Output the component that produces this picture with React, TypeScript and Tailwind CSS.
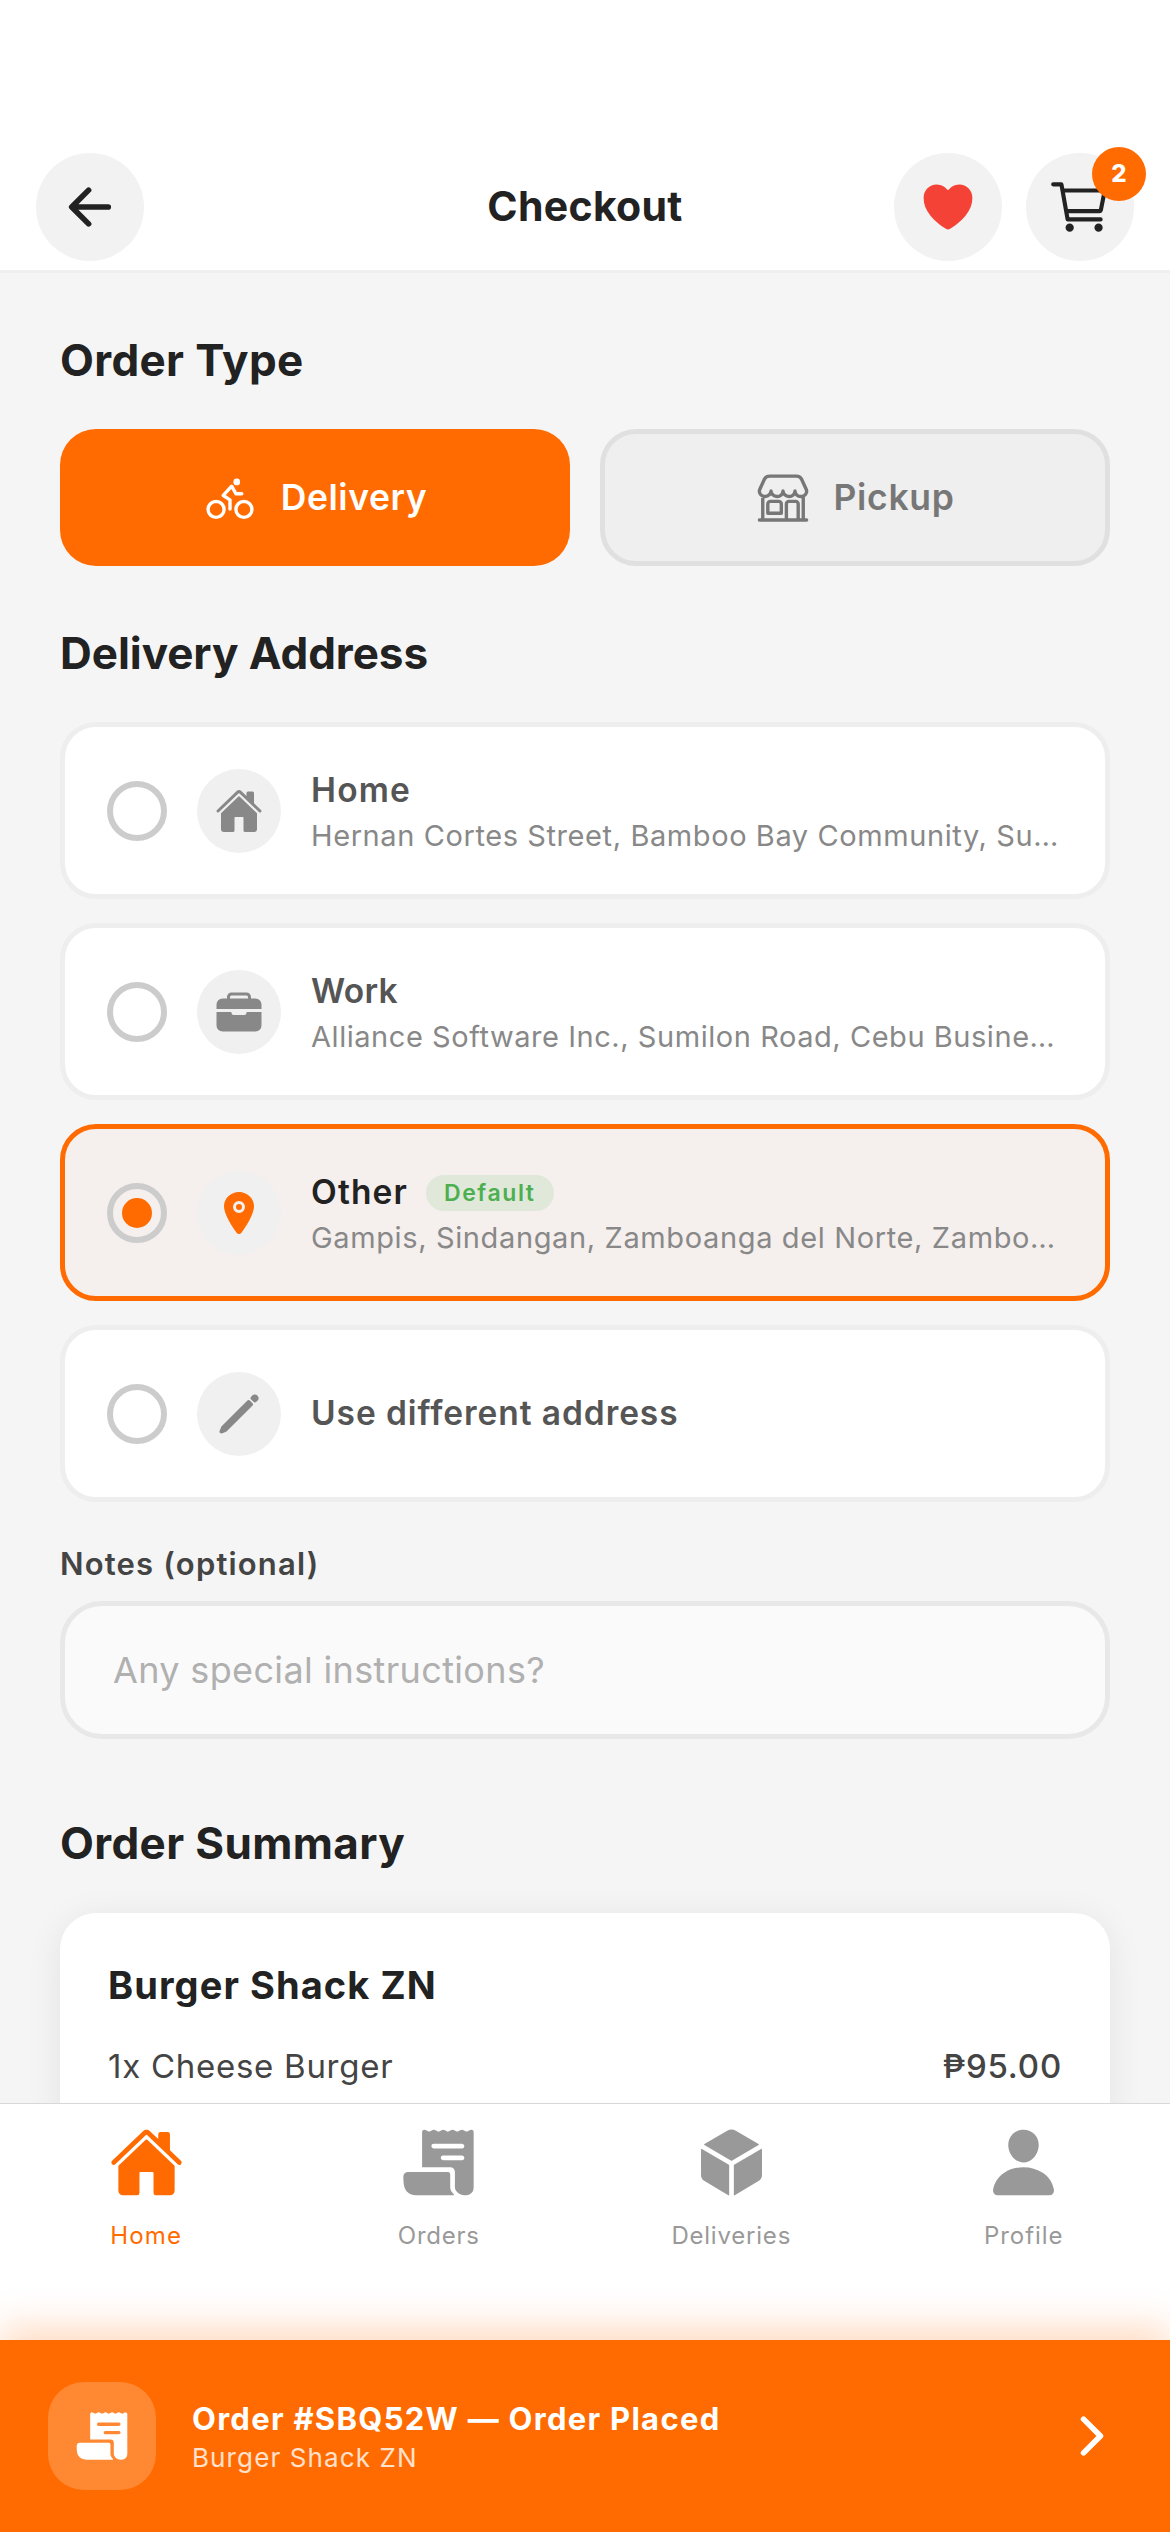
import type { ReactNode } from 'react';
import type { IconType } from 'react-icons';
import {
  IoArrowBack,
  IoBicycleOutline,
  IoBriefcase,
  IoCartOutline,
  IoChevronForward,
  IoCube,
  IoHeart,
  IoHome,
  IoLocation,
  IoPencil,
  IoPerson,
  IoReceipt,
  IoStorefrontOutline,
} from 'react-icons/io5';

type Address = {
  icon: IconType;
  title: string;
  titleTracking: string;
  detail?: string;
  detailTracking?: string;
  selected?: boolean;
};

const addresses: Address[] = [
  {
    icon: IoHome,
    title: 'Home',
    titleTracking: 'tracking-[1.15px]',
    detail: 'Hernan Cortes Street, Bamboo Bay Community, Su…',
    detailTracking: 'tracking-[0.59px]',
  },
  {
    icon: IoBriefcase,
    title: 'Work',
    titleTracking: 'tracking-[0.3px]',
    detail: 'Alliance Software Inc., Sumilon Road, Cebu Busine…',
    detailTracking: 'tracking-[0.55px]',
  },
  {
    icon: IoLocation,
    title: 'Other',
    titleTracking: 'tracking-[1.15px]',
    detail: 'Gampis, Sindangan, Zamboanga del Norte, Zambo…',
    detailTracking: 'tracking-[0.63px]',
    selected: true,
  },
  { icon: IoPencil, title: 'Use different address', titleTracking: 'tracking-[0.93px]' },
];

const tabs = [
  { icon: IoHome, label: 'Home', color: 'text-[#ff6b00]', tracking: 'tracking-[1.2px]' },
  { icon: IoReceipt, label: 'Orders', color: 'text-[#999999]', tracking: 'tracking-[0.76px]' },
  { icon: IoCube, label: 'Deliveries', color: 'text-[#999999]', tracking: 'tracking-[0.79px]' },
  { icon: IoPerson, label: 'Profile', color: 'text-[#999999]', tracking: 'tracking-[0.97px]' },
];

function RoundButton({ children }: { children: ReactNode }) {
  return (
    <button className="relative flex size-[108px] items-center justify-center rounded-full bg-[#f2f2f2] text-[#222222]">
      {children}
    </button>
  );
}

function Header() {
  return (
    <header className="grid shrink-0 grid-cols-[1fr_auto_1fr] items-center border-b-[3px] border-[#efefef] bg-white px-9 pt-[153px] pb-[9px]">
      <div>
        <RoundButton>
          <IoArrowBack className="size-[60px]" />
        </RoundButton>
      </div>
      <h1 className="pb-[3px] text-[41px] leading-[54px] font-bold tracking-[0.29px] text-[#222222]">Checkout</h1>
      <div className="flex justify-end gap-6">
        <RoundButton>
          <IoHeart className="size-[60px] text-[#f44336]" />
        </RoundButton>
        <RoundButton>
          <IoCartOutline className="size-[66px]" />
          <span className="absolute -top-1.5 -right-3 flex size-[54px] items-center justify-center rounded-full bg-[#ff6b00] text-2xl font-extrabold text-white">
            2
          </span>
        </RoundButton>
      </div>
    </header>
  );
}

function OrderType() {
  return (
    <div className="mt-[39px] grid grid-cols-2 gap-[30px]">
      <button className="flex h-[137px] items-center justify-center gap-6 rounded-[36px] bg-[#ff6b00] text-[35.5px] font-semibold tracking-[0.59px] text-white">
        <IoBicycleOutline className="size-[54px]" />
        Delivery
      </button>
      <button className="flex h-[137px] items-center justify-center gap-6 rounded-[36px] border-[5px] border-[#e0e0e0] bg-[#efefef] text-[35.5px] font-semibold tracking-[0.66px] text-[#777777]">
        <IoStorefrontOutline className="size-[54px]" />
        Pickup
      </button>
    </div>
  );
}

function AddressCard({ icon: Icon, title, titleTracking, detail, detailTracking, selected }: Address) {
  return (
    <div
      className={`flex h-[177px] items-center rounded-[36px] border-[5px] px-[42px] ${
        selected ? 'border-[#ff6b00] bg-[#f5efed]' : 'border-[#eeeeee] bg-white'
      }`}
    >
      <span className="flex size-[60px] shrink-0 items-center justify-center rounded-full border-[6px] border-[#cccccc]">
        {selected && <span className="size-[30px] rounded-full bg-[#ff6b00]" />}
      </span>
      <span
        className={`ml-[30px] flex size-[84px] shrink-0 items-center justify-center rounded-full bg-[#f0f0f0] ${
          selected ? 'text-[#ff6b00]' : 'text-[#888888]'
        }`}
      >
        <Icon className="size-12" />
      </span>
      <div className={`ml-[30px] min-w-0 ${detail ? 'pt-1' : 'pb-0.5'}`}>
        <div className="flex items-center gap-[18px]">
          <span
            className={`text-[33.5px] leading-[46px] font-semibold whitespace-nowrap ${titleTracking} ${
              selected ? 'text-[#222222]' : 'text-[#555555]'
            }`}
          >
            {title}
          </span>
          {selected && (
            <span className="mt-0.5 flex h-9 items-center rounded-full bg-[#e0e8da] pr-[18px] pl-[18px] text-[23px] leading-9 font-semibold tracking-[1.57px] text-[#4caf50]">
              Default
            </span>
          )}
        </div>
        {detail && (
          <p className={`text-[29px] leading-[46px] whitespace-nowrap text-[#888888] ${detailTracking}`}>{detail}</p>
        )}
      </div>
    </div>
  );
}

function OrderSummary() {
  return (
    <section className="mt-10 h-[600px] rounded-[36px] bg-white px-12 pt-[45px] shadow-[0_6px_36px_rgba(0,0,0,0.08)]">
      <h3 className="text-[38px] leading-[54px] font-bold tracking-[1.08px] text-[#222222]">Burger Shack ZN</h3>
      <div className="mt-[30px] flex justify-between text-[33px] leading-[48px] text-[#444444]">
        <span className="tracking-[0.73px]">1x Cheese Burger</span>
        <span className="font-medium tracking-[0.8px]">₱95.00</span>
      </div>
    </section>
  );
}

function TabBar() {
  return (
    <nav className="grid h-[237px] shrink-0 grid-cols-4 border-t border-[#d8d8d8] bg-white">
      {tabs.map(({ icon: Icon, label, color, tracking }) => (
        <a key={label} className={`flex flex-col items-center pt-[21px] ${color}`}>
          <Icon className="size-[75px]" />
          <span className={`mt-[21px] text-2xl leading-[30px] ${tracking}`}>{label}</span>
        </a>
      ))}
    </nav>
  );
}

function OrderBanner() {
  return (
    <div className="flex h-48 shrink-0 items-center bg-[#ff6b00] px-12 text-white shadow-[0_-12px_36px_rgba(255,107,0,0.25)]">
      <span className="flex size-[108px] items-center justify-center rounded-[36px] bg-white/20">
        <IoReceipt className="size-[54px]" />
      </span>
      <div className="ml-9 flex-1 pt-1">
        <p className="text-[31px] leading-[39px] font-bold tracking-[1.29px]">Order #SBQ52W — Order Placed</p>
        <p className="text-[26px] leading-[39px] tracking-[1.11px] text-white/80">Burger Shack ZN</p>
      </div>
      <IoChevronForward className="size-[60px]" />
    </div>
  );
}

export default function App() {
  return (
    <div className="flex h-[2532px] w-[1170px] flex-col overflow-hidden bg-[#f5f5f5] font-['Inter',sans-serif]">
      <Header />
      <main className="min-h-0 flex-1 overflow-hidden px-[60px] pt-[57px]">
        <h2 className="text-[44px] leading-[60px] font-bold tracking-[0.35px] text-[#222222]">Order Type</h2>
        <OrderType />
        <h2 className="mt-[57px] text-[44px] leading-[60px] font-bold tracking-[-0.05px] text-[#222222]">
          Delivery Address
        </h2>
        <div className="mt-[39px] flex flex-col gap-6">
          {addresses.map((a) => (
            <AddressCard key={a.title} {...a} />
          ))}
        </div>
        <label className="mt-10 block text-[31px] leading-[44px] font-semibold tracking-[1.18px] text-[#444444]">
          Notes (optional)
        </label>
        <input
          className="mt-[15px] block h-[138px] w-full rounded-[42px] border-[5px] border-[#e8e8e8] bg-[#fafafa] px-12 text-[36px] tracking-[0.35px] placeholder:text-[#b0b0b0]"
          placeholder="Any special instructions?"
        />
        <h2 className="mt-[74px] text-[44px] leading-[60px] font-bold tracking-[0.38px] text-[#222222]">
          Order Summary
        </h2>
        <OrderSummary />
      </main>
      <TabBar />
      <OrderBanner />
    </div>
  );
}
